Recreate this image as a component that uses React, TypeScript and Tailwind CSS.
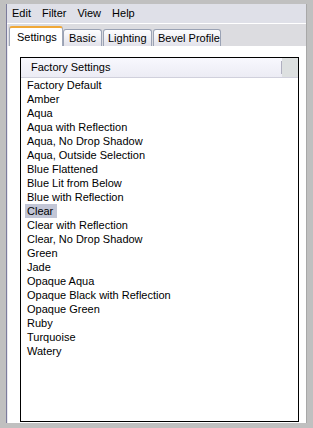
import React from "react";

const items = [
  "Factory Default",
  "Amber",
  "Aqua",
  "Aqua with Reflection",
  "Aqua, No Drop Shadow",
  "Aqua, Outside Selection",
  "Blue Flattened",
  "Blue Lit from Below",
  "Blue with Reflection",
  "Clear",
  "Clear with Reflection",
  "Clear, No Drop Shadow",
  "Green",
  "Jade",
  "Opaque Aqua",
  "Opaque Black with Reflection",
  "Opaque Green",
  "Ruby",
  "Turquoise",
  "Watery",
];

export default function App() {
  return (
    <div
      className="w-[313px] h-[428px] bg-[#c0c0c0] pt-[4px] pl-[6px] pr-[6px] pb-[5px] flex text-black"
      style={{ fontFamily: '"Liberation Sans", Arial, sans-serif' }}
    >
      <div className="flex-1 flex flex-col border-l border-[#7c7c9c] border-r border-r-[#a8a8a8]">
        {/* menu bar */}
        <div className="h-[20px] bg-[#dfe0e8] flex items-center pl-[5px] gap-[11px] text-[11px] border-b border-white whitespace-nowrap">
          <span>Edit</span>
          <span>Filter</span>
          <span>View</span>
          <span>Help</span>
        </div>
        {/* tab strip */}
        <div className="h-[22px] bg-[#dcdce0] flex items-end pl-[1px] text-[11px] border-l border-[#e8e8f0] whitespace-nowrap">
          <div className="h-[20px] w-[54px] bg-white border-t-[2px] border-t-[#f0a838] border-l border-l-[#a0a8b8] border-r border-r-[#a0a8b8] rounded-t-[3px] flex items-center pl-[7px]">
            Settings
          </div>
          <div className="h-[17px] w-[39px] bg-gradient-to-b from-[#fdfdfe] to-[#e2e2ea] border border-b-0 border-[#9aa2b4] rounded-t-[3px] flex items-center pl-[5px]">
            Basic
          </div>
          <div className="h-[17px] w-[49px] ml-[1px] bg-gradient-to-b from-[#fdfdfe] to-[#e2e2ea] border border-b-0 border-[#9aa2b4] rounded-t-[3px] flex items-center pl-[4px]">
            Lighting
          </div>
          <div className="h-[17px] w-[68px] ml-[1px] bg-gradient-to-b from-[#fdfdfe] to-[#e2e2ea] border border-b-0 border-[#9aa2b4] rounded-t-[3px] flex items-center pl-[4px]">
            Bevel Profile
          </div>
        </div>
        {/* panel */}
        <div className="flex-1 bg-white border-l border-[#e8e8f0] pl-[12px] pt-[11px] pr-[7px] pb-[1px] flex flex-col">
          <div className="flex-1 border border-black flex flex-col">
            <div className="h-[20px] flex bg-gradient-to-b from-[#f8f8fe] to-[#ececf4] border-b border-[#d0d0dc] text-[11px]">
              <div className="flex-1 flex items-center pl-[10px]">Factory Settings</div>
              <div className="w-[1px] my-[3px] bg-[#b0b0c0]"></div>
              <div className="w-[16px] bg-[#dde0e0]"></div>
            </div>
            <div className="flex flex-col pl-[6px] text-[11px] whitespace-nowrap">
              {items.map((it) => (
                <div key={it} className="h-[14px] leading-[14px] flex">
                  <span
                    className={
                      it === "Clear"
                        ? "bg-[#c2c6d6] px-[2px] -ml-[2px] w-[32px]"
                        : "px-[2px] -ml-[2px]"
                    }
                  >
                    {it}
                  </span>
                </div>
              ))}
            </div>
          </div>
        </div>
      </div>
    </div>
  );
}
